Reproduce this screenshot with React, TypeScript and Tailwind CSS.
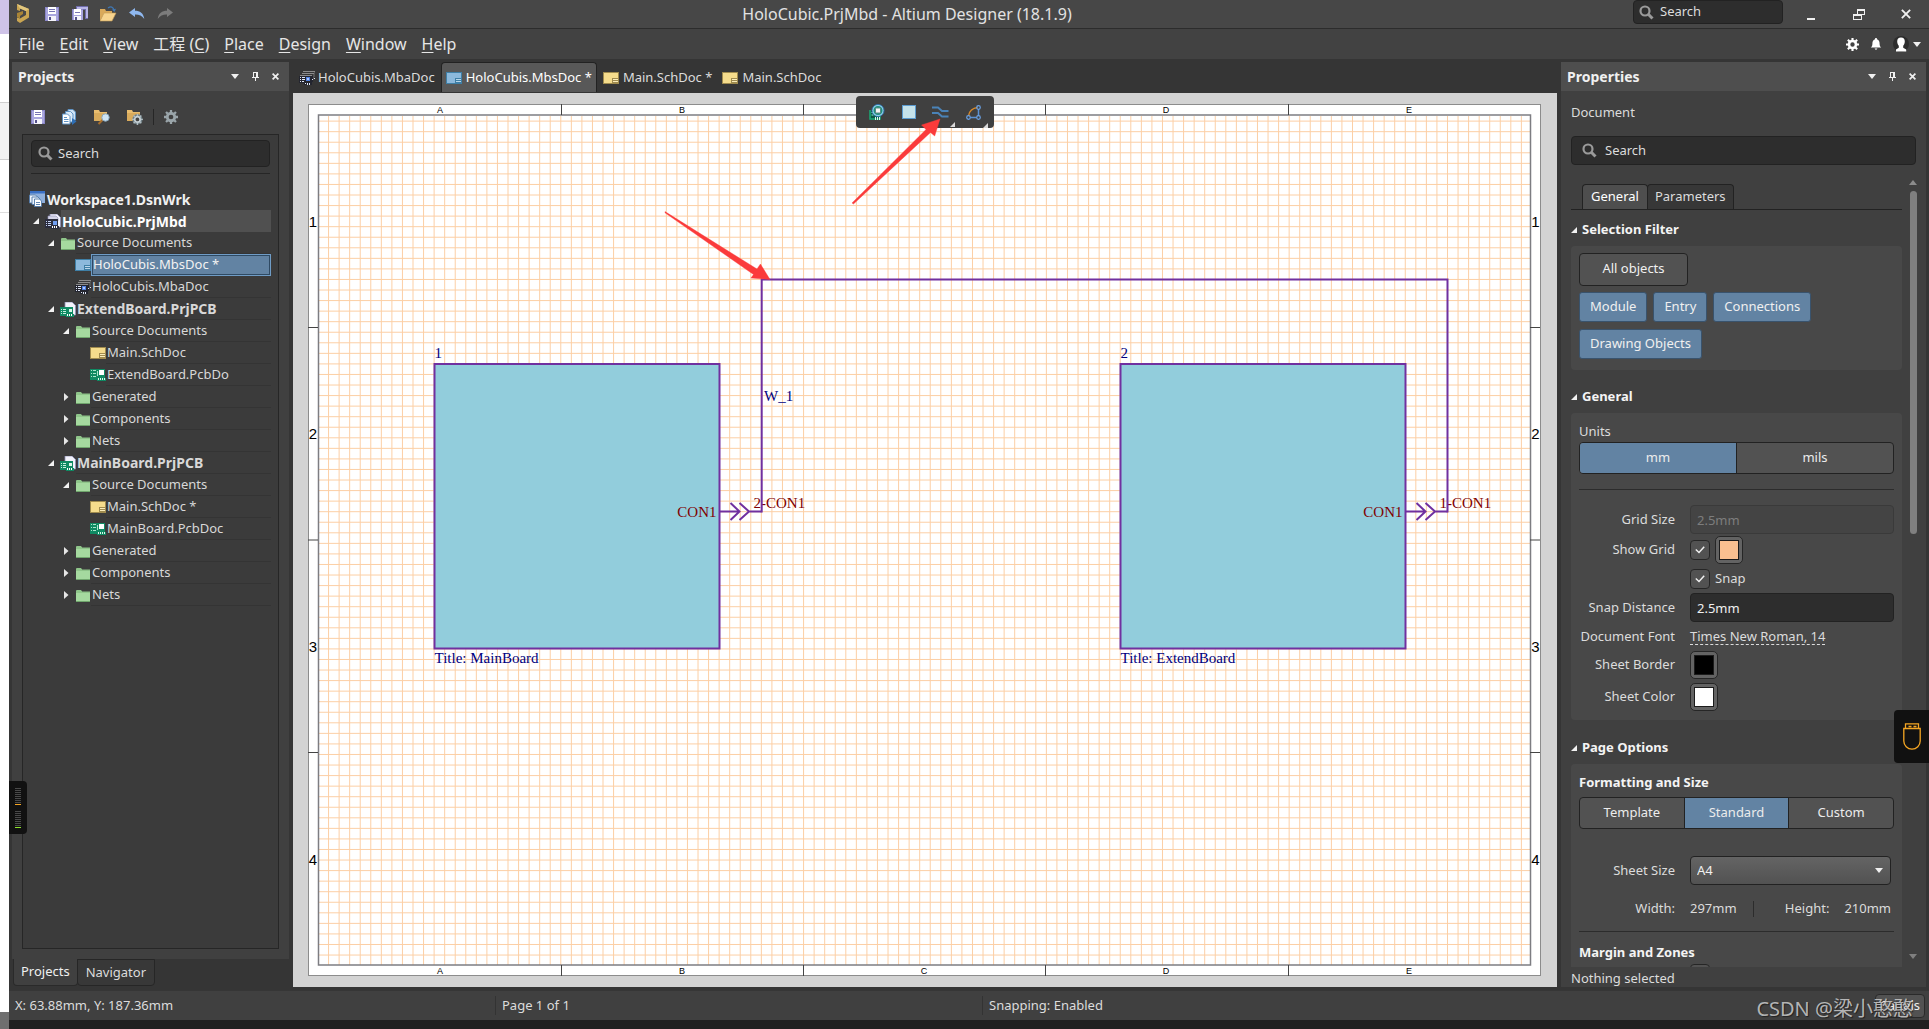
import React from "react";

/* ---------- small icons ---------- */

function Floppy({ double = false }: { double?: boolean }) {
  return (
    <svg width="16" height="16" viewBox="0 0 16 16" shapeRendering="crispEdges" aria-hidden="true">
      {double && <path d="M4 0h12v12h-3V3H4z" fill="#b9b6e8" stroke="#6f6cab" strokeWidth="1" />}
      <g transform={double ? "translate(0 3) scale(.82)" : "translate(1 1)"}>
        <path d="M0 0h14v14H0z" fill="#8a86c8" />
        <path d="M1 1h12v12H1z" fill="#a9a6de" />
        <path d="M3 0h8v7H3z" fill="#fff" />
        <path d="M4 2h6v1H4zM4 4h6v1H4z" fill="#7774b3" />
        <path d="M3 9h8v5H3z" fill="#f4f4fb" />
        <path d="M4 10h2v3H4z" fill="#55528c" />
      </g>
    </svg>
  );
}

function OpenFolder() {
  return (
    <svg width="17" height="16" viewBox="0 0 17 16" aria-hidden="true">
      <path d="M0 15V3h5l1 2h6v3H4z" fill="#d9a95b" />
      <path d="M0 15l4-8h12l-4 8z" fill="#f7d48f" stroke="#c39a55" strokeWidth=".6" />
      <path d="M8 2c3-2 5-1 6 2" fill="none" stroke="#3f78b5" strokeWidth="1.3" />
      <path d="M12 3.5l4-.8-1.6 3.3z" fill="#3f78b5" />
    </svg>
  );
}

function Undo({ color, flip = false }: { color: string; flip?: boolean }) {
  return (
    <svg width="16" height="12" viewBox="0 0 16 12" aria-hidden="true">
      <g transform={flip ? "translate(16 0) scale(-1 1)" : undefined}>
        <path d="M0 4.500L6 0v2.800c5 0 8.500 2.400 9.300 8.200C13 7.500 10 6.400 6 6.500V9z" fill={color} />
      </g>
    </svg>
  );
}

function Logo() {
  return (
    <svg width="14" height="20" viewBox="0 0 14 20" aria-hidden="true">
      <path d="M1 0l12 5v8.500L4 19l-3-2v-3.500l3 1 6-3.500V7L4 4.500V7L1 6z" fill="#c9a552" />
      <path d="M1 9l6-2v3l-3 2v2.500L1 13z" fill="#a98436" />
      <path d="M1 0l12 5-3 2-6-2.500z" fill="#e2c77e" />
    </svg>
  );
}

function Gear({ color, size = 14 }: { color: string; size?: number }) {
  return (
    <svg width={size} height={size} viewBox="0 0 16 16" aria-hidden="true">
      <circle cx="8" cy="8" r="4.300" fill="none" stroke={color} strokeWidth="3.200" />
      <path
        d="M8 0v3M8 13v3M0 8h3M13 8h3M2.300 2.300l2 2M11.700 11.700l2 2M13.700 2.300l-2 2M4.300 11.700l-2 2"
        stroke={color}
        strokeWidth="2.600"
      />
    </svg>
  );
}

function CopyDocs() {
  return (
    <svg width="15" height="16" viewBox="0 0 15 16" aria-hidden="true">
      <path d="M6 .5h5l2.500 2.500v8H6z" fill="#cfe3f5" stroke="#5f93c4" />
      <path d="M3.500 2.500h5L11 5v8H3.500z" fill="#dcebf8" stroke="#5f93c4" />
      <path d="M.5 5h5L8 7.500V15H.5z" fill="#fff" stroke="#5f93c4" />
      <path d="M2 8.500h3M2 10.500h4.500M2 12.500h4.500" stroke="#5f93c4" />
      <path d="M10 9l4.500 3.500L10 16z" fill="#2f6fb5" />
    </svg>
  );
}

function FolderTool({ kind }: { kind: "search" | "gear" }) {
  return (
    <svg width="17" height="16" viewBox="0 0 17 16" aria-hidden="true">
      <path d="M1 1h5l1 2h7v9H1z" fill="#e9bd6f" />
      <path d="M1 4h13v8H1z" fill="#d9ab5c" />
      {kind === "search" ? (
        <>
          <path d="M9.500 11l-4 4" stroke="#a76e2d" strokeWidth="2" />
          <circle cx="12.500" cy="8.500" r="3.700" fill="#cfe4f3" stroke="#89a9c0" />
        </>
      ) : (
        <g transform="translate(6 5) scale(.68)">
          <circle cx="8" cy="8" r="7.500" fill="#6f7f86" />
          <circle cx="8" cy="8" r="4" fill="#444" stroke="#c9d3d7" strokeWidth="2.500" />
          <path d="M8 0v3M8 13v3M0 8h3M13 8h3M2.300 2.300l2 2M11.700 11.700l2 2M13.700 2.300l-2 2M4.300 11.700l-2 2" stroke="#aebbc0" strokeWidth="2" />
        </g>
      )}
    </svg>
  );
}

function Magnifier() {
  return (
    <svg width="15" height="15" viewBox="0 0 15 15" className="shrink-0" aria-hidden="true">
      <circle cx="6" cy="6" r="4.500" fill="none" stroke="#9a9a9a" strokeWidth="2.200" />
      <path d="M9.300 9.300l4.200 4.200" stroke="#9a9a9a" strokeWidth="3" />
    </svg>
  );
}

function Folder() {
  return (
    <svg width="14" height="13" viewBox="0 0 14 13" aria-hidden="true">
      <path d="M0 1.500L1 1h4l1.200 1.500H14V12H0z" fill="#8fc58a" />
      <path d="M0 4h14v8H0z" fill="#a5d99f" />
      <path d="M0 12.500h14" stroke="#6fa56c" />
    </svg>
  );
}

function Sheet({ blue = false }: { blue?: boolean }) {
  const line = blue ? "#3f7fa6" : "#a08b4e";
  return (
    <svg width="16" height="12" viewBox="0 0 16 12" shapeRendering="crispEdges" aria-hidden="true">
      <path d="M0 0h16v12H0z" fill={line} />
      <path d="M1 1h14v10H1z" fill={blue ? "#8cb9dc" : "#f5dc8c"} />
      <path d="M9 6h6v5H9z" fill={line} />
      <path d="M10 7h5v1h-5zM10 9h5v1h-5z" fill={blue ? "#b9d6ea" : "#fbeebb"} />
    </svg>
  );
}

function Board() {
  return (
    <svg width="16" height="12" viewBox="0 0 16 12" shapeRendering="crispEdges" aria-hidden="true">
      <path d="M0 0h15v9h1v3H7v-1H0z" fill="#0f8a63" />
      <path d="M1 1h1v1H1zM3 1h3v1H3zM1 4h1v1H1zM3 4h3v1H3zM1 7h1v1H1zM3 7h3v1H3zM7 2h1v5H7z" fill="#a8e6cb" />
      <path d="M9 1h5v5H9z" fill="#fff" />
      <path d="M8 9h1v2H8zM10 9h1v2h-1zM12 9h1v2h-1zM14 9h1v2h-1z" fill="#d9f6ea" />
    </svg>
  );
}

function Project({ dark = false }: { dark?: boolean }) {
  return (
    <svg width="16" height="15" viewBox="0 0 16 15" aria-hidden="true">
      <path d="M5 0h7l3.500 3.500V13H5z" fill="#f2f2fb" stroke="#8f8fb5" strokeWidth=".8" />
      {dark && <path d="M3 2h8l2 2v3H3z" fill="#d5d5e8" stroke="#8f8fb5" strokeWidth=".6" />}
      <g shapeRendering="crispEdges">
        <path d="M0 5h13v7h1v3H6v-1H0z" fill={dark ? "#2b2d3e" : "#0f8a63"} />
        <path d="M1 7h1v1H1zM3 7h3v1H3zM1 9h1v1H1zM3 9h3v1H3zM1 11h1v1H1zM3 11h3v1H3z" fill={dark ? "#c4d2f2" : "#c7f0df"} />
        <path d={dark ? "M8 7h4v4H8z" : "M9 7h3v3H9z"} fill={dark ? "#6f9df0" : "#d9f6ea"} />
        <path d="M7 12h1v2H7zM9 12h1v2H9zM11 12h1v2h-1z" fill="#fff" />
      </g>
    </svg>
  );
}

function Assembly() {
  return (
    <svg width="16" height="14" viewBox="0 0 16 14" shapeRendering="crispEdges" aria-hidden="true">
      <path d="M4 0h12v1H4zM3 2h12v1H3zM1 4h12v1H1z" fill="#8b8b8b" />
      <path d="M0 5h14v6h-1v3H5v-2H0z" fill="#23252f" />
      <path d="M14 3h1v5h-1zM15 1h1v5h-1z" fill="#555" />
      <path d="M1 6h1v1H1zM3 6h3v1H3zM1 8h1v1H1zM3 8h3v1H3zM1 10h1v1H1zM3 10h2v1H3zM6 12h1v1H6zM8 12h1v2H8zM10 12h1v2h-1zM13 8h1v1h-1zM15 7h1v1h-1z" fill="#dfe6f7" />
      <path d="M7 6h4v4H7z" fill="#4d7fe0" />
      <path d="M8 7h2v2H8z" fill="#a9c6ff" />
    </svg>
  );
}

function Workspace() {
  return (
    <svg width="16" height="16" viewBox="0 0 16 16" aria-hidden="true">
      <path d="M1 0h15v12H1z" fill="#8fb0dc" />
      <path d="M1 0h15v2.500H1z" fill="#3a70c4" />
      <path d="M.5 4h6l2 2v6h-8z" fill="#eef4fb" stroke="#4f78a8" strokeWidth=".9" />
      <path d="M3 6h6l2 2v5.500H3z" fill="#eef4fb" stroke="#4f78a8" strokeWidth=".9" />
      <path d="M5.500 8h5l2 2v5.500h-7z" fill="#fff" stroke="#4f78a8" strokeWidth=".9" />
      <path d="M7 11.500h4M7 13.500h4" stroke="#4f78a8" strokeWidth=".9" />
    </svg>
  );
}

function Expanded() {
  return (
    <svg width="6" height="6" viewBox="0 0 6 6" aria-hidden="true">
      <path d="M6 0v6H0z" fill="#f2f2f2" />
    </svg>
  );
}

function Collapsed() {
  return (
    <svg width="5" height="8" viewBox="0 0 5 8" aria-hidden="true">
      <path d="M0 0l4.500 4L0 8z" fill="#e6e6e6" />
    </svg>
  );
}

function Down({ color = "#f0f0f0" }: { color?: string }) {
  return (
    <svg width="8" height="5" viewBox="0 0 8 5" aria-hidden="true">
      <path d="M0 0h8L4 5z" fill={color} />
    </svg>
  );
}

function Pin() {
  return (
    <svg width="7" height="9" viewBox="0 0 7 9" shapeRendering="crispEdges" aria-hidden="true">
      <path d="M1 0h5v5h1v1H4v3H3V6H0V5h1zM2 1v4h2V1z" fill="#f0f0f0" fillRule="evenodd" />
    </svg>
  );
}

function Cross({ size = 7 }: { size?: number }) {
  return (
    <svg width={size} height={size} viewBox="0 0 7 7" aria-hidden="true">
      <path d="M.6.6l5.800 5.800M6.400.6L.6 6.400" stroke="#f0f0f0" strokeWidth={size > 8 ? 1.300 : 1.700} />
    </svg>
  );
}

/* ---------- shared pieces ---------- */

function PanelHeader({ title }: { title: string }) {
  return (
    <header className="flex h-[29px] shrink-0 items-center bg-[#4e4e4e] px-1.5 pr-2.5">
      <h2 className="flex-1 text-[14px] font-bold text-[#f0f0f0]">{title}</h2>
      <div className="flex items-center gap-[13px]">
        <button aria-label="Panel menu"><Down /></button>
        <button aria-label="Pin panel"><Pin /></button>
        <button aria-label="Close panel"><Cross /></button>
      </div>
    </header>
  );
}

function SearchBox({ label, className }: { label: string; className: string }) {
  return (
    <label className={"flex items-center rounded border border-[#222] bg-[#2d2d2d] " + className}>
      <Magnifier />
      <input
        aria-label={label}
        placeholder="Search"
        className="w-full min-w-0 bg-transparent text-[13px] text-[#dcdcdc] outline-none placeholder:text-[#dcdcdc]"
      />
    </label>
  );
}

/* ---------- title bar and menu ---------- */

function TitleBar() {
  return (
    <header className="relative flex h-[29px] shrink-0 items-center border-b border-[#2c2c2c] bg-[#474747] pl-[7px]">
      <div className="flex items-center">
        <span className="mr-3.5"><Logo /></span>
        <div className="flex items-center gap-3">
          <button aria-label="Save"><Floppy /></button>
          <button aria-label="Save all"><Floppy double /></button>
          <button aria-label="Open"><OpenFolder /></button>
          <button aria-label="Undo"><Undo color="#8fb8ef" /></button>
          <button aria-label="Redo"><Undo color="#7c7c7c" flip /></button>
        </div>
      </div>
      <h1 className="flex-1 pl-2 text-center text-[16px] text-[#e2e2e2]">HoloCubic.PrjMbd - Altium Designer (18.1.9)</h1>
      <div className="flex items-center">
        <SearchBox label="Search commands" className="mb-1 h-6 w-[150px] gap-1.5 px-[5px]" />
        <div className="ml-6 mr-[18px] flex items-center gap-9">
          <button aria-label="Minimize" className="flex h-3 w-2.5 items-end"><span className="h-0.5 w-2 bg-[#f0f0f0]" /></button>
          <button aria-label="Restore">
            <svg width="12" height="11" viewBox="0 0 12 11" shapeRendering="crispEdges" aria-hidden="true">
              <path d="M4 .5h7.500v5h-3M.5 5.500h8v5h-8z" fill="none" stroke="#f0f0f0" />
              <path d="M4 0h8v2H4zM4 0h1v5H4zM0 5h9v2H0z" fill="#f0f0f0" />
            </svg>
          </button>
          <button aria-label="Close"><Cross size={10} /></button>
        </div>
      </div>
    </header>
  );
}

const menus: [string, string, string][] = [
  ["", "F", "ile"],
  ["", "E", "dit"],
  ["", "V", "iew"],
  ["工程 (", "C", ")"],
  ["", "P", "lace"],
  ["", "D", "esign"],
  ["", "W", "indow"],
  ["", "H", "elp"],
];

function MenuBar() {
  return (
    <nav className="flex h-[30px] shrink-0 items-center bg-[#424242] pl-2.5 pr-2">
      <div className="flex flex-1 gap-[15px] text-[16px] text-[#e6e6e6]">
        {menus.map(([before, key, after]) => (
          <button key={key}>{before}<u className="underline-offset-2">{key}</u>{after}</button>
        ))}
      </div>
      <div className="flex items-center gap-[11px]">
        <button aria-label="Settings"><Gear color="#fff" size={13} /></button>
        <button aria-label="Notifications">
          <svg width="12" height="13" viewBox="0 0 12 13" aria-hidden="true">
            <path d="M6 0c.8 0 1 .6 1 1.200C9 1.800 9.600 3.500 9.600 6c0 2 .8 2.800 1.600 3.500H.8C1.600 8.800 2.400 8 2.400 6c0-2.500.6-4.200 2.600-4.800C5 .6 5.200 0 6 0zM4.500 10.500h3L6 12z" fill="#fff" />
          </svg>
        </button>
        <button aria-label="Account" className="flex items-center gap-1">
          <svg width="16" height="16" viewBox="0 0 16 16" aria-hidden="true">
            <circle cx="8" cy="8" r="8" fill="#2c2c2c" />
            <path d="M8 1.500c2.500 0 3.800 1.500 3.800 4 0 2-.8 3.300-1.600 4.200v2l3 1.800V15.500H3v-2l2.800-1.800v-2C5 8.800 4.200 7.500 4.200 5.500c0-2.500 1.300-4 3.800-4z" fill="#fff" />
          </svg>
          <Down />
        </button>
      </div>
    </nav>
  );
}

/* ---------- projects panel ---------- */

type Row = { depth: number; icon: React.ReactNode; text: string; arrow?: "open" | "closed"; bold?: boolean; state?: "focus" | "selected" };

const rows: Row[] = [
  { depth: 0, icon: <Project dark />, text: "HoloCubic.PrjMbd", arrow: "open", bold: true, state: "focus" },
  { depth: 1, icon: <Folder />, text: "Source Documents", arrow: "open" },
  { depth: 2, icon: <Sheet blue />, text: "HoloCubis.MbsDoc *", state: "selected" },
  { depth: 2, icon: <Assembly />, text: "HoloCubis.MbaDoc" },
  { depth: 1, icon: <Project />, text: "ExtendBoard.PrjPCB", arrow: "open", bold: true },
  { depth: 2, icon: <Folder />, text: "Source Documents", arrow: "open" },
  { depth: 3, icon: <Sheet />, text: "Main.SchDoc" },
  { depth: 3, icon: <Board />, text: "ExtendBoard.PcbDo" },
  { depth: 2, icon: <Folder />, text: "Generated", arrow: "closed" },
  { depth: 2, icon: <Folder />, text: "Components", arrow: "closed" },
  { depth: 2, icon: <Folder />, text: "Nets", arrow: "closed" },
  { depth: 1, icon: <Project />, text: "MainBoard.PrjPCB", arrow: "open", bold: true },
  { depth: 2, icon: <Folder />, text: "Source Documents", arrow: "open" },
  { depth: 3, icon: <Sheet />, text: "Main.SchDoc *" },
  { depth: 3, icon: <Board />, text: "MainBoard.PcbDoc" },
  { depth: 2, icon: <Folder />, text: "Generated", arrow: "closed" },
  { depth: 2, icon: <Folder />, text: "Components", arrow: "closed" },
  { depth: 2, icon: <Folder />, text: "Nets", arrow: "closed" },
];

const indent = ["pl-1", "pl-[19px]", "pl-[34px]", "pl-[49px]"];

function TreeRow({ row }: { row: Row }) {
  const look =
    row.state === "focus"
      ? "bg-[#505050] text-white"
      : row.state === "selected"
        ? "border border-[#6f9cc6] bg-[#6283a3] text-[#f2f2f2] ring-1 ring-inset ring-[#2f4a63]"
        : "border-b border-[#343434] text-[#d8d8d8]";
  return (
    <li className={"flex h-[22px] items-center " + indent[row.depth]}>
      <span className="mr-1 flex w-2.5 shrink-0 items-center justify-center">
        {row.arrow === "open" ? <Expanded /> : row.arrow === "closed" ? <Collapsed /> : null}
      </span>
      <span className="flex w-4 shrink-0 justify-center">{row.icon}</span>
      <span className={"flex h-full min-w-0 flex-1 items-center whitespace-nowrap pl-px " + look + (row.bold ? " text-[14px] font-bold" : " text-[13px]")}>
        {row.text}
      </span>
    </li>
  );
}

function ProjectsPanel() {
  return (
    <aside className="flex w-[281px] shrink-0 flex-col pl-[3px] pt-[3px]">
      <section className="flex min-h-0 w-[277px] flex-1 flex-col bg-[#404040]">
        <PanelHeader title="Projects" />
        <div className="flex h-[43px] shrink-0 items-center gap-4 pl-[18px] pt-2">
          <button aria-label="Save document"><Floppy /></button>
          <button aria-label="Copy documents"><CopyDocs /></button>
          <button aria-label="Explore folder"><FolderTool kind="search" /></button>
          <button aria-label="Folder options"><FolderTool kind="gear" /></button>
          <span className="-mx-1.5 h-4 w-px bg-[#262626]" />
          <button aria-label="Project options"><Gear color="#9aa5aa" size={14} /></button>
        </div>
        <div className="mx-2.5 mb-2.5 flex min-h-0 flex-1 flex-col border border-[#262626] bg-[#3b3b3b] pl-2 pr-2">
          <SearchBox label="Search projects" className="mt-[5px] h-[27px] shrink-0 gap-[5px] px-1.5" />
          <hr className="mt-1.5 border-[#262626]" />
          <div className="mt-[14px] flex h-[22px] items-center gap-0.5 text-[14px] font-bold text-[#f0f0f0]">
            <span className="-ml-0.5"><Workspace /></span>Workspace1.DsnWrk
          </div>
          <ul className="-ml-1 -mr-px">{rows.map((row, i) => <TreeRow key={i} row={row} />)}</ul>
        </div>
      </section>
      <div className="flex h-[28px] shrink-0 pl-px text-[13px]">
        <button className="h-[27px] rounded-b border border-t-0 border-[#2a2a2a] bg-[#404040] px-[7px] text-[#f0f0f0]">Projects</button>
        <button className="-ml-px h-[27px] rounded-b border border-[#262626] bg-[#383838] px-2 text-[#dcdcdc]">Navigator</button>
      </div>
    </aside>
  );
}

/* ---------- document tabs and canvas ---------- */

function DocTabs() {
  return (
    <div role="tablist" className="flex h-[34px] shrink-0 items-end text-[13px] text-[#dcdcdc]">
      <button role="tab" className="flex h-[31px] items-center gap-[3px] px-1.5"><Assembly />HoloCubis.MbaDoc</button>
      <button role="tab" aria-selected="true" className="mb-px flex h-[30px] items-center gap-1 rounded-t border border-b-0 border-[#222] bg-[#585858] px-1 text-white"><Sheet blue />HoloCubis.MbsDoc *</button>
      <button role="tab" className="flex h-[31px] items-center gap-1 pl-1.5 pr-1"><Sheet />Main.SchDoc *</button>
      <button role="tab" className="flex h-[31px] items-center gap-1 px-1.5"><Sheet />Main.SchDoc</button>
    </div>
  );
}

const PITCH = 10.556;
const gridX = Array.from({ length: 114 }, (_, i) => 318 + (i + 1) * PITCH);
const gridY = Array.from({ length: 80 }, (_, i) => 965.6 - (i + 1) * PITCH);
const columns: [string, number][] = [["A", 440], ["B", 682], ["C", 924], ["D", 1166], ["E", 1409]];
const zones: [string, number][] = [["1", 221], ["2", 433], ["3", 646], ["4", 859]];

function ModuleBlock({ x, num, title, net }: { x: number; num: string; title: string; net: string }) {
  return (
    <g fontFamily="'Liberation Serif', serif" fontSize="15">
      <rect x={x} y="364" width="285" height="284.500" fill="#92cddc" stroke="#7030a0" strokeWidth="2" />
      <text x={x} y="358" fill="#000080">{num}</text>
      <text x={x} y="663" fill="#000080">{title}</text>
      <text x={x + 282} y="517" textAnchor="end" fill="#800000">CON1</text>
      <path d={`M${x + 285} 511.500h20M${x + 296} 503l9 8.500-9 8.500M${x + 305} 503l9.500 8.500-9.500 8.500M${x + 314} 511.500h13`} fill="none" stroke="#7030a0" strokeWidth="2" />
      <text x={x + 319} y="508" fill="#800000">{net}</text>
    </g>
  );
}

function Schematic() {
  return (
    <svg className="block h-full w-full" viewBox="293 93 1264 894" preserveAspectRatio="xMinYMin slice" role="img" aria-label="Multi-board schematic">
      <rect x="308.500" y="104.500" width="1232" height="871" fill="#fff" stroke="#8c8c8c" />
      <path d={gridX.map((x) => `M${x} 116V965`).join("")} stroke="#fccfa5" />
      <path d={gridY.map((y) => `M319 ${y}H1530`).join("")} stroke="#fccfa5" />
      <rect x="318.500" y="115" width="1212" height="850" fill="none" stroke="#7d7d82" strokeWidth="1.500" />
      <path d="M561.500 104v11M803.500 104v11M1045.500 104v11M1288.500 104v11M561.500 965v11M803.500 965v11M1045.500 965v11M1288.500 965v11" stroke="#444" />
      <path d="M308 327.500h10M308 540h10M308 752.500h10M1530 327.500h10M1530 540h10M1530 752.500h10" stroke="#444" />
      <g fontFamily="'Liberation Sans', sans-serif" fill="#000" textAnchor="middle">
        {columns.map(([name, x]) => (
          <g key={name} fontSize="9">
            <text x={x} y="113">{name}</text>
            <text x={x} y="974">{name}</text>
          </g>
        ))}
        {zones.map(([name, y]) => (
          <g key={name} fontSize="15">
            <text x="313" y={y + 6}>{name}</text>
            <text x="1535.500" y={y + 6}>{name}</text>
          </g>
        ))}
      </g>
      <ModuleBlock x={434.5} num="1" title="Title: MainBoard" net="2-CON1" />
      <ModuleBlock x={1120.5} num="2" title="Title: ExtendBoard" net="1-CON1" />
      <path d="M761.700 512.500V279.500H1447.500V512.500" fill="none" stroke="#7030a0" strokeWidth="2" />
      <text x="764" y="401" fontFamily="'Liberation Serif', serif" fontSize="15" fill="#000080">W_1</text>
    </svg>
  );
}

function CanvasToolbar() {
  const corner = (
    <svg width="5" height="5" viewBox="0 0 5 5" className="absolute -bottom-2 -right-1.5" aria-hidden="true">
      <path d="M5 0v5H0z" fill="#d8d8d8" />
    </svg>
  );
  return (
    <div className="absolute left-1/2 top-[3px] flex h-8 w-[138px] -translate-x-1/2 items-center justify-between rounded bg-[#404040] px-3">
      <button aria-label="Place module board">
        <svg width="17" height="17" viewBox="0 0 17 17" aria-hidden="true">
          <path d="M2 6v9h10v-3" fill="#0d5a45" stroke="#19a974" strokeWidth="1.500" />
          <path d="M3.500 8h2v1h-2zM3.500 10.500h2v1h-2z" fill="#8ff0cb" />
          <circle cx="10" cy="6.500" r="5.200" fill="#1f8f7d" stroke="#8fd0ea" strokeWidth="1.400" />
          <circle cx="10" cy="6.500" r="6.100" fill="none" stroke="#2a6fae" strokeWidth=".8" />
          <path d="M7.500 4h5v5h-5z" fill="#f4f4f4" stroke="#5b8a83" />
          <path d="M7.500 13v3M9.500 13v3M11.500 13v3" stroke="#d9f6ea" />
        </svg>
      </button>
      <button aria-label="Place module"><span className="block size-3.5 border border-[#5b9bd0] bg-[#c5e2ea]" /></button>
      <button aria-label="Place connection" className="relative">
        <svg width="17" height="14" viewBox="0 0 17 14" aria-hidden="true">
          <path d="M0 2.500h6l4 3.500h6.500M0 8h6l4 3.500h6.500" fill="none" stroke="#4a83b8" strokeWidth="2" />
        </svg>
        {corner}
      </button>
      <button aria-label="Draw arc" className="relative">
        <svg width="16" height="15" viewBox="0 0 16 15" aria-hidden="true">
          <path d="M2.500 11C3 6 7 3 11.500 2.500" fill="none" stroke="#d98a2b" strokeWidth="1.500" />
          <path d="M12.500 4v7M4.500 12.500h6" stroke="#5b93d6" strokeWidth="1.500" />
          <circle cx="12.500" cy="2.500" r="1.800" fill="none" stroke="#6aa2e6" strokeWidth="1.200" />
          <circle cx="2.500" cy="12.500" r="1.800" fill="none" stroke="#6aa2e6" strokeWidth="1.200" />
          <circle cx="12.500" cy="12.500" r="1.800" fill="none" stroke="#6aa2e6" strokeWidth="1.200" />
        </svg>
        {corner}
      </button>
    </div>
  );
}

function Workarea() {
  return (
    <main className="flex min-w-0 flex-1 flex-col">
      <DocTabs />
      <div className="relative min-h-0 flex-1 overflow-hidden bg-[#d3d3d3]">
        <Schematic />
        <CanvasToolbar />
        <svg className="pointer-events-none absolute inset-0 h-full w-full" viewBox="293 93 1264 894" preserveAspectRatio="xMinYMin slice" aria-hidden="true">
          <path d="M852 203L926 129.500 921.500 125 940 119 934.700 136 930.500 132.500 853.500 204z" fill="#fb3b3b" stroke="#fb3b3b" strokeWidth=".4" />
          <path d="M665 211.600L757 269 760.400 264 770 279.500 751 278 753.500 274.500 665 212.800z" fill="#fb3b3b" stroke="#fb3b3b" strokeWidth=".4" />
        </svg>
      </div>
    </main>
  );
}

/* ---------- properties panel ---------- */

function Section({ title, children, className = "" }: { title: string; children: React.ReactNode; className?: string }) {
  return (
    <section className={className}>
      <h3 className="flex h-5 items-center gap-[5px] text-[13px] font-bold text-[#f4f4f4]"><Expanded />{title}</h3>
      <div className="mt-1.5 rounded bg-[#484848] px-2">{children}</div>
    </section>
  );
}

function Chip({ children }: { children: string }) {
  return (
    <button className="h-[30px] rounded-[3px] border border-[#39536d] bg-[#6283a3] px-2.5 text-[#f0f0f0]">{children}</button>
  );
}

function Segments({ items, active }: { items: string[]; active: string }) {
  return (
    <div className="flex h-8 divide-x divide-[#222] overflow-hidden rounded border border-[#222] bg-[#525252] text-[#ececec]">
      {items.map((item) => (
        <button key={item} aria-pressed={item === active} className={"flex-1 " + (item === active ? "bg-[#6283a3]" : "")}>{item}</button>
      ))}
    </div>
  );
}

const fieldLabel = "w-24 shrink-0 text-right";

function Swatch({ label, color }: { label: string; color: string }) {
  return (
    <button aria-label={label} className="flex size-7 items-center justify-center rounded-[5px] border border-[#262626] bg-[#636363]">
      <span className={"size-[20px] border border-[#1c1c1c] " + color} />
    </button>
  );
}

function Check({ id, label }: { id: string; label: string }) {
  return (
    <span className="relative flex size-5">
      <input id={id} type="checkbox" defaultChecked aria-label={label} className="size-5 appearance-none rounded border border-[#262626] bg-[#525252]" />
      <svg width="10" height="8" viewBox="0 0 10 8" className="pointer-events-none absolute left-[5px] top-1.5" aria-hidden="true">
        <path d="M.8 3.500L4 6.500 9.200.8" fill="none" stroke="#f0f0f0" strokeWidth="1.500" />
      </svg>
    </span>
  );
}

function PropertiesPanel() {
  return (
    <aside className="flex w-[372px] shrink-0 flex-col pl-1 pr-[3px] pt-[3px]">
      <div className="flex min-h-0 flex-1 flex-col bg-[#404040] text-[13px] text-[#dcdcdc]">
        <PanelHeader title="Properties" />
        <p className="mt-[11px] h-5 px-2.5 leading-5">Document</p>
        <SearchBox label="Search properties" className="mx-2.5 mt-[14px] h-[29px] shrink-0 gap-2 px-2.5" />
        <div className="mt-[14px] flex min-h-0 flex-1 gap-1.5 pl-2.5 pr-2">
          <div className="min-w-0 flex-1 overflow-hidden">
            <div role="tablist" className="mt-[5px] flex border-b border-[#222] pl-[11px]">
              <button role="tab" aria-selected="true" className="h-[25px] rounded-t border border-b-0 border-[#222] bg-[#4e4e4e] px-2 text-white">General</button>
              <button role="tab" className="-ml-px h-[25px] rounded-t border border-b-0 border-[#222] bg-[#373737] px-[7px]">Parameters</button>
            </div>
            <Section title="Selection Filter" className="mt-2.5">
              <div className="h-[124px] pt-[7px]">
                <button className="h-[33px] w-[109px] rounded border border-[#222] bg-[#525252] pb-0.5 text-[#f0f0f0]">All objects</button>
                <div className="mt-1.5 flex flex-wrap gap-x-1.5 gap-y-[7px]">
                  <Chip>Module</Chip><Chip>Entry</Chip><Chip>Connections</Chip><Chip>Drawing Objects</Chip>
                </div>
              </div>
            </Section>
            <Section title="General" className="mt-[17px]">
              <div className="h-[307px] pt-2">
                <p className="mb-px leading-5">Units</p>
                <Segments items={["mm", "mils"]} active="mm" />
                <hr className="mb-[15px] mt-[15px] border-[#2c2c2c]" />
                <div className="flex items-center gap-[15px]">
                  <label htmlFor="grid" className={fieldLabel}>Grid Size</label>
                  <input id="grid" disabled defaultValue="2.5mm" className="h-[29px] min-w-0 flex-1 rounded border border-[#3a3a3a] bg-[#444] px-1.5 text-[#7d7d7d]" />
                </div>
                <div className="mt-px flex h-[30px] items-center gap-[15px]">
                  <label htmlFor="show" className={fieldLabel}>Show Grid</label>
                  <span className="flex items-center gap-[5px]"><Check id="show" label="Show Grid" /><Swatch label="Grid color" color="bg-[#fac090]" /></span>
                </div>
                <div className="flex h-7 items-center gap-[5px] pl-[111px]">
                  <Check id="snap" label="Snap" /><label htmlFor="snap">Snap</label>
                </div>
                <div className="flex items-center gap-[15px]">
                  <label htmlFor="dist" className={fieldLabel}>Snap Distance</label>
                  <input id="dist" defaultValue="2.5mm" className="h-[29px] min-w-0 flex-1 rounded border border-[#222] bg-[#2d2d2d] px-1.5 text-[#f0f0f0]" />
                </div>
                <div className="flex h-[29px] items-center gap-[15px]">
                  <span className={fieldLabel}>Document Font</span>
                  <a href="#font" className="border-b border-dashed border-[#dcdcdc] leading-4">Times New Roman, 14</a>
                </div>
                <div className="flex h-7 items-center gap-[15px]"><span className={fieldLabel}>Sheet Border</span><Swatch label="Sheet border" color="bg-black" /></div>
                <div className="mt-1 flex h-7 items-center gap-[15px]"><span className={fieldLabel}>Sheet Color</span><Swatch label="Sheet color" color="bg-white" /></div>
              </div>
            </Section>
            <Section title="Page Options" className="mt-[18px]">
              <h4 className="pb-[5px] pt-2 text-[13px] font-bold leading-5 text-[#f4f4f4]">Formatting and Size</h4>
              <Segments items={["Template", "Standard", "Custom"]} active="Standard" />
              <div className="mt-[27px] flex items-center gap-[15px]">
                <label htmlFor="size" className={fieldLabel}>Sheet Size</label>
                <span className="relative mr-[3px] flex-1">
                  <select id="size" className="block h-[29px] w-full appearance-none rounded border border-[#222] bg-linear-to-b from-[#646464] to-[#525252] px-1.5 text-[#f0f0f0]">
                    <option>A4</option>
                    <option>A3</option>
                  </select>
                  <span className="pointer-events-none absolute right-2 top-3"><Down /></span>
                </span>
              </div>
              <div className="mr-[3px] mt-2.5 flex h-7 items-center">
                <span className={fieldLabel}>Width:</span>
                <span className="ml-[15px] flex-1">297mm</span>
                <span className="mr-[31px] h-4 w-px bg-[#2c2c2c]" />
                <span>Height:</span>
                <span className="ml-[15px]">210mm</span>
              </div>
              <hr className="mt-2 border-[#2c2c2c]" />
              <h4 className="mt-2.5 text-[13px] font-bold leading-5 text-[#f4f4f4]">Margin and Zones</h4>
              <div className="mt-0.5 pl-[111px]"><Check id="zones" label="Show zones" /></div>
            </Section>
          </div>
          <div className="flex w-2.5 flex-col items-center pb-2 pt-px">
            <svg width="8" height="5" viewBox="0 0 8 5" aria-hidden="true"><path d="M0 5h8L4 0z" fill="#8c8c8c" /></svg>
            <div className="mt-1.5 flex-1"><div className="h-[45%] w-[7px] rounded-full bg-[#808080]" /></div>
            <Down color="#808080" />
          </div>
        </div>
        <p className="h-5 shrink-0 px-2.5 pt-[3px] leading-4">Nothing selected</p>
      </div>
    </aside>
  );
}

/* ---------- status bar and desktop overlays ---------- */

function StatusBar() {
  return (
    <footer className="flex h-[30px] shrink-0 items-center border-t border-[#363636] bg-[#404040] pr-1 text-[13px] text-[#dcdcdc]">
      <span className="w-[486px] shrink-0 pl-1.5">X: 63.88mm, Y: 187.36mm</span>
      <span className="w-[487px] shrink-0 border-l border-[#333] pl-1.5">Page 1 of 1</span>
      <span className="flex-1 border-l border-[#333] pl-1.5">Snapping: Enabled</span>
      <button className="h-6 rounded border border-[#2a2a2a] bg-[#525252] px-1 text-[#f0f0f0]">Panels</button>
    </footer>
  );
}

function Meter({ tip }: { tip: string }) {
  return (
    <div className="flex w-1.5 flex-col gap-px">
      {Array.from({ length: 8 }, (_, i) => <span key={i} className="h-px bg-[#4a4a4a]" />)}
      <span className={"h-px " + tip} />
    </div>
  );
}

export default function App() {
  return (
    <div className="relative flex h-screen overflow-hidden bg-[#353535] font-['Noto_Sans','Noto_Sans_CJK_SC',sans-serif]">
      <div className="flex w-[9px] shrink-0 flex-col bg-white">
        <div className="h-[34px] bg-[#cfc3e8]" />
        <div className="mt-[68px] h-[58px] border-y border-[#cfcfcf] bg-[#f2f2f2]" />
        <div className="h-[53px] border-b border-[#dedede]" />
        <div className="flex-1" />
        <div className="h-[17px] bg-[#6f6f6f]" />
      </div>
      <div className="flex min-w-0 flex-1 flex-col">
        <TitleBar />
        <MenuBar />
        <div className="flex min-h-0 flex-1">
          <div className="flex w-[284px] shrink-0 flex-col [&>aside]:flex-1"><ProjectsPanel /></div>
          <Workarea />
          <PropertiesPanel />
        </div>
        <div className="h-[3px] shrink-0" />
        <StatusBar />
        <div className="h-[9px] shrink-0 bg-[#202020]" />
      </div>
      <div className="absolute left-[9px] top-[781px] flex h-[53px] w-[18px] flex-col justify-center gap-1.5 rounded-r bg-[#111] pl-1.5">
        <Meter tip="bg-[#f5a623]" />
        <Meter tip="bg-[#8be32b]" />
      </div>
      <div className="absolute right-0 top-[710px] flex h-[53px] w-[35px] items-center justify-center rounded-l bg-[#111]">
        <svg width="18" height="28" viewBox="0 0 18 28" fill="none" stroke="#f5a623" strokeWidth="1.300" aria-hidden="true">
          <path d="M2.500 5.500V.8h13v4.700M.8 5.500h16.400V18a8.200 8.200 0 01-16.400 0zM5.500 3.500h3M10.500 3.500h3" />
        </svg>
      </div>
      <div className="pointer-events-none absolute bottom-1.5 right-4 text-[20px] leading-7 text-[#d8d8d8]/80 [text-shadow:1px_1px_1px_#222]">CSDN @梁小憨憨</div>
    </div>
  );
}
